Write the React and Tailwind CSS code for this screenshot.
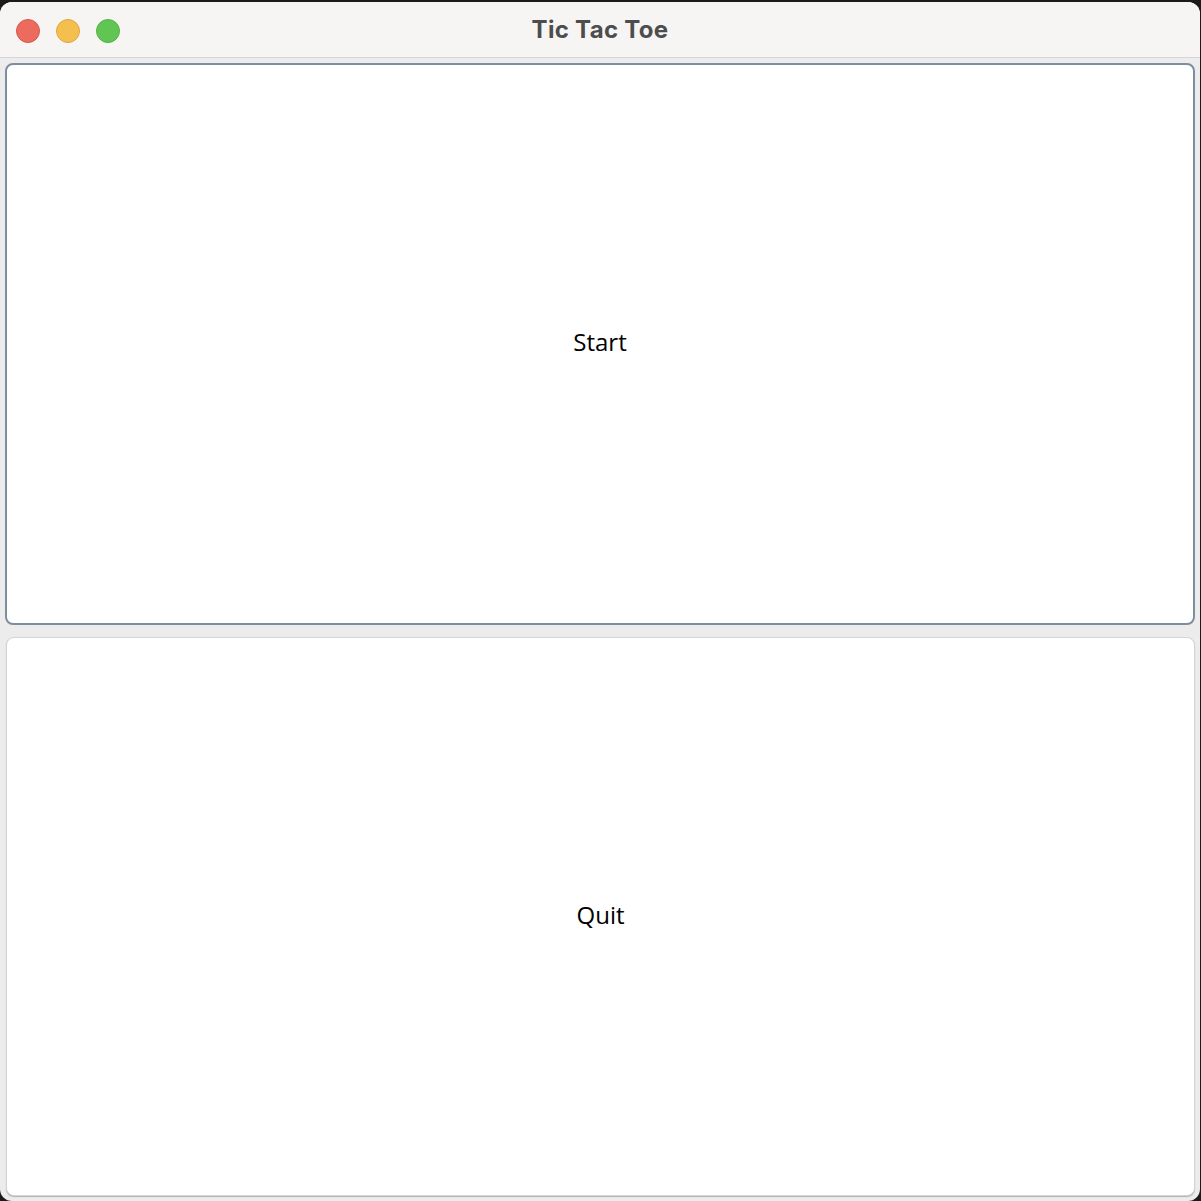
import React from 'react';

const App = () => {
  return (
    <div className="w-[1201px] h-[1201px] bg-[#1b1b1b] pt-[2px] pr-[1px]">
      <div
        className="flex flex-col h-[1199px] w-[1200px] rounded-[12px] overflow-hidden bg-[#ececec]"
        style={{ fontFamily: '"Open Sans", "DejaVu Sans", sans-serif' }}
      >
        {/* Title bar */}
        <div className="relative flex items-center justify-center h-[56px] bg-[#f6f5f4] border-b border-[#d6d5d4] shrink-0">
          <div className="absolute left-[16px] top-[17px] flex gap-[16px]">
            <span className="w-[24px] h-[24px] rounded-full bg-[#ec6a5e] border border-[#d8574c]" />
            <span className="w-[24px] h-[24px] rounded-full bg-[#f5bf4f] border border-[#dea83d]" />
            <span className="w-[24px] h-[24px] rounded-full bg-[#61c554] border border-[#50b244]" />
          </div>
          <h1
            className="text-[24px] font-bold text-[#4d4d4d] tracking-[0.3px]"
            style={{ fontFamily: 'Inter, "Liberation Sans", sans-serif' }}
          >
            Tic Tac Toe
          </h1>
        </div>

        {/* Content */}
        <div className="flex flex-col flex-1 gap-[12px] pt-[5px] pb-[5px] pl-[5px] pr-[5px]">
          <button className="flex-1 flex items-center justify-center bg-white rounded-[8px] border-2 border-[#7f8da3] text-[24px] text-black pb-[3px]">
            Start
          </button>
          <button className="flex-1 flex items-center justify-center bg-white rounded-[8px] border border-[#d4d4d4] shadow-[0_1px_1px_rgba(0,0,0,0.25)] text-[24px] text-black ml-[1px] pb-[3px]">
            Quit
          </button>
        </div>
      </div>
    </div>
  );
};

export default App;
